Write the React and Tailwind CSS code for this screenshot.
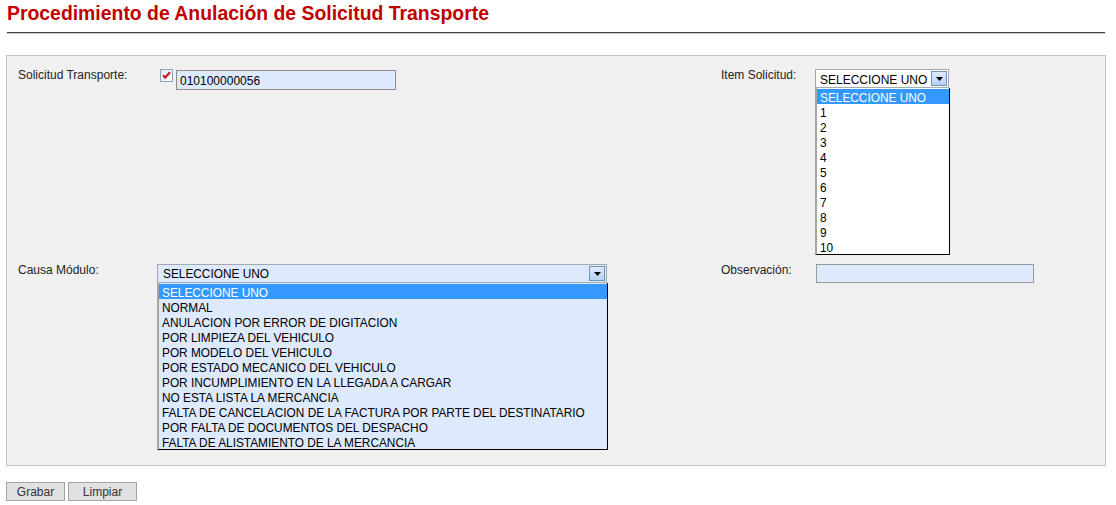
import React from "react";

const items = ["SELECCIONE UNO", "1", "2", "3", "4", "5", "6", "7", "8", "9", "10"];

const causas = [
  "SELECCIONE UNO",
  "NORMAL",
  "ANULACION POR ERROR DE DIGITACION",
  "POR LIMPIEZA DEL VEHICULO",
  "POR MODELO DEL VEHICULO",
  "POR ESTADO MECANICO DEL VEHICULO",
  "POR INCUMPLIMIENTO EN LA LLEGADA A CARGAR",
  "NO ESTA LISTA LA MERCANCIA",
  "FALTA DE CANCELACION DE LA FACTURA POR PARTE DEL DESTINATARIO",
  "POR FALTA DE DOCUMENTOS DEL DESPACHO",
  "FALTA DE ALISTAMIENTO DE LA MERCANCIA",
];

function ArrowButton() {
  return (
    <div className="flex h-full w-[16px] items-center justify-center border border-[#6f93b6] bg-[linear-gradient(to_bottom,#dfeafc,#b7d1f4)]">
      <svg width="7" height="4" viewBox="0 0 7 4">
        <path d="M0 0h7L3.5 4z" fill="#000" />
      </svg>
    </div>
  );
}

function Checkbox() {
  return (
    <svg width="13" height="13" viewBox="0 0 13 13" className="block">
      <defs>
        <linearGradient id="cb" x1="0" y1="0" x2="1" y2="1">
          <stop offset="0" stopColor="#dfe6ee" />
          <stop offset="1" stopColor="#ffffff" />
        </linearGradient>
      </defs>
      <rect x="0.5" y="0.5" width="12" height="12" fill="url(#cb)" stroke="#8ea3b8" />
      <path d="M3 6.2l2.2 2.4L10 3.3" fill="none" stroke="#c0202a" strokeWidth="2.2" />
    </svg>
  );
}

function ListBox({ options, width, bg }) {
  return (
    <div
      className={`border-l-2 border-r border-b border-l-[#a6a6a6] border-r-black border-b-black pt-[1px] text-[11.85px] ${bg} ${width}`}
    >
      {options.map((o, i) => (
        <div
          key={i}
          className={`h-[15px] whitespace-nowrap pl-[3px] pt-[2px] leading-[14px] ${
            i === 0 ? "bg-[#3399ff] text-white" : "text-black"
          }`}
        >
          {o}
        </div>
      ))}
    </div>
  );
}

export default function App() {
  return (
    <div className="min-h-[505px] bg-white text-[12px] text-[#222] [font-family:'Liberation_Sans',Arial,sans-serif]">
      <div className="px-[7px] pt-[1px] text-[19.4px] font-bold leading-[24px] text-[#c00000]">
        Procedimiento de Anulación de Solicitud Transporte
      </div>
      <div className="ml-[7px] mr-[11px] mt-[7px] h-[2px] border-t border-b border-t-[#444] border-b-[#c9c9c9]" />

      <div className="ml-[6px] mr-[10px] mt-[21px] border border-[#c3c3c3] bg-[#f0f0f0] pb-[15px] pl-[11px] pt-[13px]">
        {/* fila 1 */}
        <div className="flex items-start">
          <div className="flex w-[703px] items-start">
            <div className="w-[139px] leading-[13px]">Solicitud Transporte:</div>
            <div className="ml-[3px]">
              <Checkbox />
            </div>
            <div className="ml-[3px] mt-[1px] flex h-[20px] w-[220px] items-center border border-[#8c8c8c] bg-[#dde9fc] pl-[3px] pt-[2px] text-black">
              010100000056
            </div>
          </div>
          <div className="flex items-start">
            <div className="w-[94px] leading-[13px]">Item Solicitud:</div>
            <div className="flex flex-col">
              <div className="flex h-[19px] w-[134px] items-center border border-[#a5a9ae] bg-white p-[1px]">
                <div className="flex-1 pl-[3px] pt-[2px] text-black">SELECCIONE UNO</div>
                <ArrowButton />
              </div>
              <ListBox options={items} width="w-[135px]" bg="bg-white" />
            </div>
          </div>
        </div>

        {/* fila 2 */}
        <div className="mt-[9px] flex items-start">
          <div className="flex w-[703px] items-start">
            <div className="w-[139px] leading-[13px]">Causa Módulo:</div>
            <div className="flex flex-col">
              <div className="flex h-[19px] w-[450px] items-center border border-[#a5a9ae] bg-[#dde9fc] p-[1px]">
                <div className="flex-1 pl-[4px] pt-[2px] text-[11.85px] text-black">SELECCIONE UNO</div>
                <ArrowButton />
              </div>
              <ListBox options={causas} width="w-[451px]" bg="bg-[#dde9fc]" />
            </div>
          </div>
          <div className="flex items-start">
            <div className="w-[95px] leading-[13px]">Observación:</div>
            <div className="h-[19px] w-[218px] border border-[#9a9a9a] bg-[#dde9fc]" />
          </div>
        </div>
      </div>

      <div className="ml-[6px] mt-[16px] flex gap-[3px]">
        <button className="h-[19px] w-[59px] border border-[#a3a3a3] bg-[#e1e1e1] pt-[1px] text-[12px] leading-[16px] text-[#333]">
          Grabar
        </button>
        <button className="h-[19px] w-[69px] border border-[#a3a3a3] bg-[#e1e1e1] pt-[1px] text-[12px] leading-[16px] text-[#333]">
          Limpiar
        </button>
      </div>
    </div>
  );
}
